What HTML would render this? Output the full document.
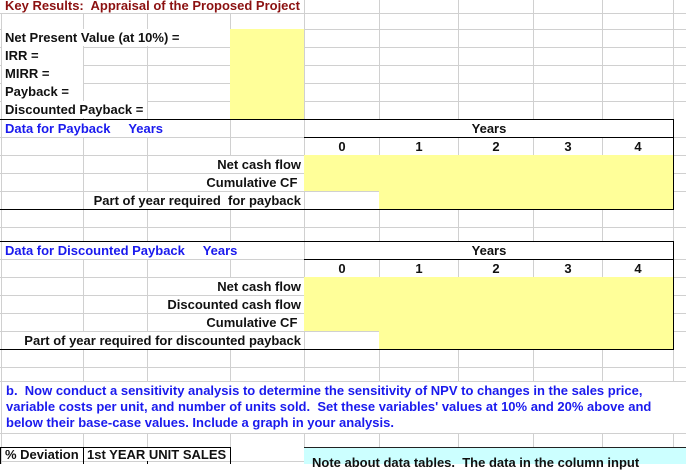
<!DOCTYPE html>
<html><head><meta charset="utf-8"><style>
*{margin:0;padding:0;box-sizing:border-box}
body{width:686px;height:464px;overflow:hidden;background:#fff;position:relative;font-family:"Liberation Sans",Arial,sans-serif;font-weight:bold;font-size:13px;color:#111}
.h{position:absolute;left:0;width:686px;height:1px;background:#d0d0d0}
.v{position:absolute;top:0;height:464px;width:1px;background:#d0d0d0}
.t{position:absolute;background:#fff;white-space:nowrap;line-height:18px;height:17px;overflow:visible}
.r{text-align:right;padding-right:3px}
.c{text-align:center}
.y{position:absolute;background:#ffff99}
.bk{position:absolute;background:#000}
.blue{color:#1a1aee}
</style></head><body>
<div class="h" style="top:13px"></div><div class="h" style="top:29px"></div><div class="h" style="top:47px"></div><div class="h" style="top:65px"></div><div class="h" style="top:83px"></div><div class="h" style="top:101px"></div><div class="h" style="top:137px"></div><div class="h" style="top:155px"></div><div class="h" style="top:173px"></div><div class="h" style="top:191px"></div><div class="h" style="top:227px"></div><div class="h" style="top:259px"></div><div class="h" style="top:277px"></div><div class="h" style="top:295px"></div><div class="h" style="top:313px"></div><div class="h" style="top:331px"></div><div class="h" style="top:367px"></div><div class="h" style="top:381px"></div><div class="h" style="top:433px"></div><div class="h" style="top:461px"></div>
<div class="v" style="left:1px"></div><div class="v" style="left:83px"></div><div class="v" style="left:147px"></div><div class="v" style="left:230px"></div><div class="v" style="left:304px"></div><div class="v" style="left:379px"></div><div class="v" style="left:458px"></div><div class="v" style="left:533px"></div><div class="v" style="left:602px"></div><div class="v" style="left:673px"></div>

<div class="t" style="left:0;top:-3px;width:303px;height:16px;color:#8b1010;padding-left:5px">Key Results:&nbsp; Appraisal of the Proposed Project</div>
<div class="y" style="left:230px;top:29px;width:74px;height:90px"></div>
<div class="t" style="left:2px;top:29px;width:228px;padding-left:3px">Net Present Value (at 10%) =</div>
<div class="t" style="left:2px;top:47px;width:81px;padding-left:3px">IRR =</div>
<div class="t" style="left:2px;top:65px;width:81px;padding-left:3px">MIRR =</div>
<div class="t" style="left:2px;top:83px;width:81px;padding-left:3px">Payback =</div>
<div class="t" style="left:2px;top:101px;width:145px;padding-left:3px">Discounted Payback =</div>
<div class="bk" style="left:0;top:119px;width:674px;height:1px"></div>

<div class="t blue" style="left:2px;top:120px;width:228px;padding-left:3px">Data for Payback&nbsp;&nbsp;&nbsp;&nbsp; Years</div>
<div class="t c" style="left:305px;top:120px;width:368px">Years</div>
<div class="bk" style="left:304px;top:137px;width:370px;height:1px"></div>
<div class="t c" style="left:305px;top:138px;width:74px;background:none">0</div>
<div class="t c" style="left:380px;top:138px;width:78px;background:none">1</div>
<div class="t c" style="left:459px;top:138px;width:74px;background:none">2</div>
<div class="t c" style="left:534px;top:138px;width:68px;background:none">3</div>
<div class="t c" style="left:603px;top:138px;width:70px;background:none">4</div>
<div class="y" style="left:304px;top:155px;width:369px;height:36px"></div>
<div class="y" style="left:379px;top:191px;width:294px;height:18px"></div>
<div class="t r" style="left:148px;top:156px;width:156px">Net cash flow</div>
<div class="t r" style="left:148px;top:174px;width:156px">Cumulative CF&nbsp;</div>
<div class="t r" style="left:84px;top:192px;width:220px">Part of year required&nbsp; for payback</div>
<div class="t" style="left:305px;top:192px;width:74px"></div>
<div class="bk" style="left:0;top:209px;width:674px;height:1px"></div>
<div class="bk" style="left:673px;top:119px;width:1px;height:91px"></div>

<div class="bk" style="left:0;top:241px;width:674px;height:1px"></div>
<div class="t blue" style="left:2px;top:242px;width:302px;padding-left:3px">Data for Discounted Payback&nbsp;&nbsp;&nbsp;&nbsp; Years</div>
<div class="t c" style="left:305px;top:242px;width:368px">Years</div>
<div class="bk" style="left:304px;top:259px;width:370px;height:1px"></div>
<div class="t c" style="left:305px;top:260px;width:74px;background:none">0</div>
<div class="t c" style="left:380px;top:260px;width:78px;background:none">1</div>
<div class="t c" style="left:459px;top:260px;width:74px;background:none">2</div>
<div class="t c" style="left:534px;top:260px;width:68px;background:none">3</div>
<div class="t c" style="left:603px;top:260px;width:70px;background:none">4</div>
<div class="y" style="left:304px;top:277px;width:369px;height:54px"></div>
<div class="y" style="left:379px;top:331px;width:294px;height:18px"></div>
<div class="t r" style="left:148px;top:278px;width:156px">Net cash flow</div>
<div class="t r" style="left:148px;top:296px;width:156px">Discounted cash flow</div>
<div class="t r" style="left:148px;top:314px;width:156px">Cumulative CF&nbsp;</div>
<div class="t r" style="left:2px;top:332px;width:302px">Part of year required for discounted payback</div>
<div class="t" style="left:305px;top:332px;width:74px"></div>
<div class="bk" style="left:0;top:349px;width:674px;height:1px"></div>
<div class="bk" style="left:673px;top:241px;width:1px;height:109px"></div>

<div class="t blue" style="left:2px;top:382px;width:684px;height:51px;line-height:16px;padding:1px 0 0 4px;white-space:normal">b.&nbsp; Now conduct a sensitivity analysis to determine the sensitivity of NPV to changes in the sales price,<br>variable costs per unit, and number of units sold.&nbsp; Set these variables' values at 10% and 20% above and<br>below their base-case values. Include a graph in your analysis.</div>

<div class="bk" style="left:0;top:447px;width:231px;height:1px"></div>
<div class="bk" style="left:0;top:447px;width:1px;height:17px"></div>
<div class="bk" style="left:83px;top:447px;width:1px;height:17px"></div>
<div class="bk" style="left:230px;top:447px;width:1px;height:17px"></div>
<div class="bk" style="left:147px;top:461px;width:1px;height:3px"></div>
<div class="t" style="left:2px;top:448px;width:81px;height:13px;line-height:14px;padding-left:3px">% Deviation</div>
<div class="t" style="left:84px;top:448px;width:146px;height:13px;line-height:14px;padding-left:3px">1st YEAR UNIT SALES</div>
<div style="position:absolute;left:304px;top:447px;width:382px;height:17px;background:#ccffff;border-top:1px solid #222"></div>
<div class="t" style="left:312px;top:456px;background:none;line-height:14px">Note about data tables.&nbsp; The data in the column input</div>
</body></html>
